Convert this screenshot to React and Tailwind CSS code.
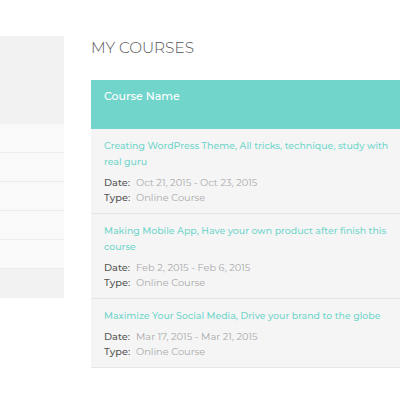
export default function App() {
  const courses = [
    {
      title: "Creating WordPress Theme, All tricks, technique, study with real guru",
      date: "Oct 21, 2015 - Oct 23, 2015",
    },
    {
      title: "Making Mobile App, Have your own product after finish this course",
      date: "Feb 2, 2015 - Feb 6, 2015",
    },
    {
      title: "Maximize Your Social Media, Drive your brand to the globe",
      date: "Mar 17, 2015 - Mar 21, 2015",
    },
  ];
  return (
    <div className="w-[400px] h-[400px] overflow-hidden bg-white flex font-['Montserrat','Inter',sans-serif]">
      <div className="w-[64px] shrink-0 mt-[36px] flex flex-col">
        <div className="h-[88px] bg-[#f2f2f2]" />
        {[0, 1, 2, 3, 4].map((i) => (
          <div key={i} className="h-[29px] bg-[#f9f9f9] border-b border-[#ececec]" />
        ))}
        <div className="h-[29px] bg-[#f2f2f2]" />
      </div>
      <div className="ml-[27px] w-[318px] shrink-0 pt-[38px]">
        <h2 className="text-[15.3px] leading-[20px] font-light text-[#555]">MY COURSES</h2>
        <div className="mt-[22px] h-[49px] bg-[#72d5cc] pl-[13px] pt-[9px]">
          <div className="text-[11px] leading-[14px] font-medium text-white">Course Name</div>
        </div>
        {courses.map((c, i) => (
          <div key={i} className="bg-[#f5f5f5] border-b border-[#e6e6e6] pl-[13px] pr-[14px] pt-[9px] pb-[8px]">
            <div className="text-[9.4px] leading-[16px] font-medium text-[#72d6cb]">{c.title}</div>
            <div className="mt-[6px] text-[9.8px] leading-[14.5px]">
              <div className="flex">
                <span className="w-[32px] font-medium text-[#555]">Date:</span>
                <span className="text-[#aaa]">{c.date}</span>
              </div>
              <div className="flex">
                <span className="w-[32px] font-medium text-[#555]">Type:</span>
                <span className="text-[#aaa]">Online Course</span>
              </div>
            </div>
          </div>
        ))}
      </div>
    </div>
  );
}
